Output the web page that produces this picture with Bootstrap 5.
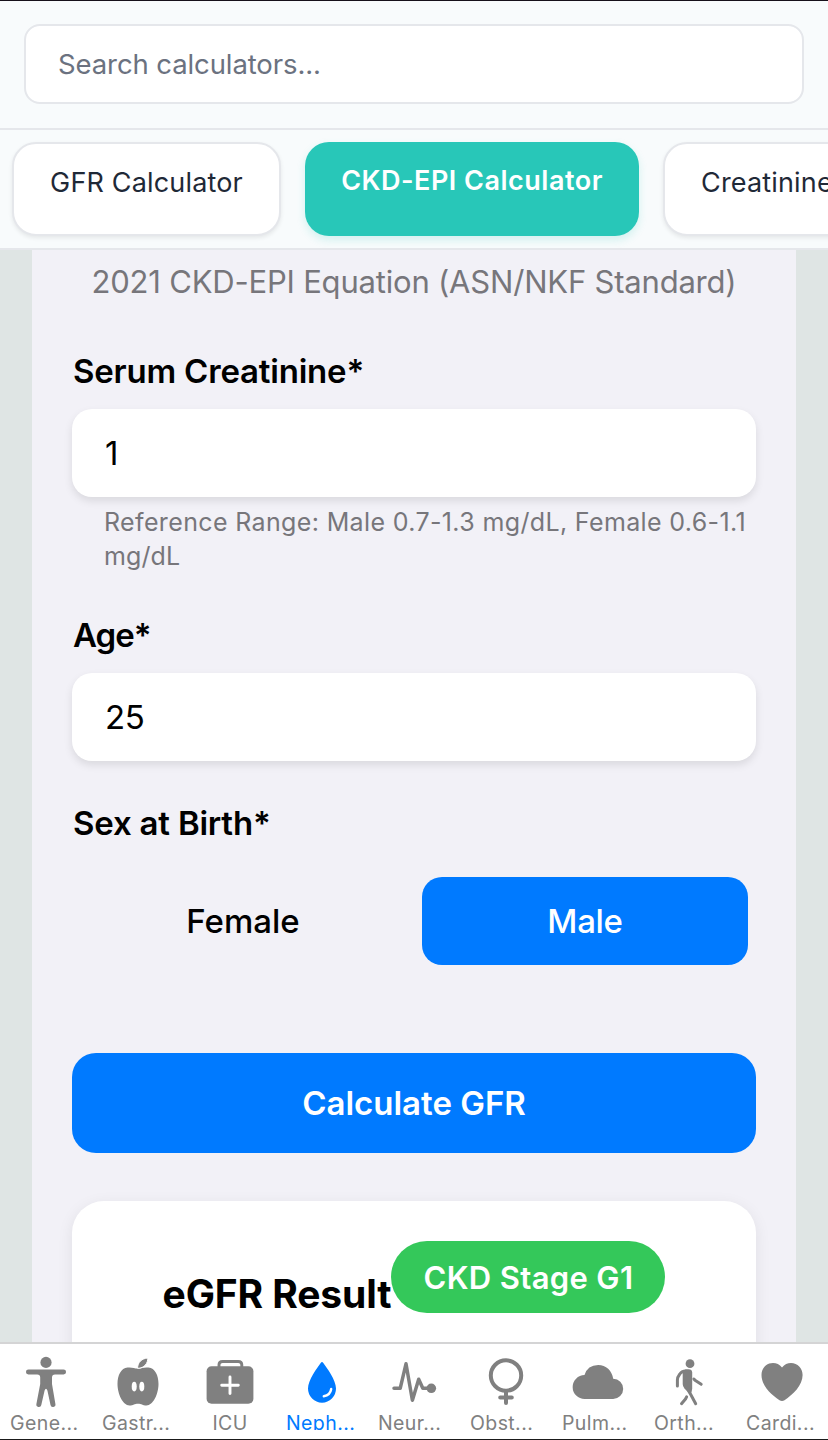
<!DOCTYPE html>
<html lang="en">
<head>
<meta charset="utf-8">
<meta name="viewport" content="width=device-width, initial-scale=1">
<title>CKD-EPI Calculator</title>
<link href="https://cdn.jsdelivr.net/npm/bootstrap@5.3.0/dist/css/bootstrap.min.css" rel="stylesheet">
<style>
  body { font-family: Inter, "Liberation Sans", sans-serif; background: #dfe5e4; color: #000; height: 1440px; border-top: 1px solid #16101a; border-bottom: 1px solid #1a1a1a; }
  .text-line { white-space: nowrap; }
  .search-bar { height: 129px; padding: 23px 24px 24px; background: #f8fbfc; border-bottom: 2px solid #e5e7eb; }
  .search-bar .form-control { height: 80px; border: 2px solid #e5e7eb; border-radius: 16px; padding: 0 32px; font-size: 27.5px; letter-spacing: -.1px; color: #1f2937; }
  .search-bar .form-control::placeholder { color: #6b7280; opacity: 1; }
  .tab-strip { height: 120px; padding: 12px; gap: 24px; background: #f8fbfc; border-bottom: 2px solid #e5e7eb; }
  .calc-tab { height: 94px; border: 2px solid #e5e7eb; border-radius: 24px; background: #fff; color: #1f2937; font-size: 27px; line-height: 36px; padding: 21px 0; box-shadow: 0 2px 4px rgba(0,0,0,.08); text-align: center; letter-spacing: .17px; }
  .calc-tab.active { border: 0; background: #28c7b8; color: #fff; font-weight: 600; letter-spacing: .5px; box-shadow: 0 4px 8px rgba(40,199,184,.18); }
  .tab-gfr { width: 269px; } .tab-epi { width: 334px; } .tab-cre { width: 334px; text-align: left !important; padding-left: 36px; }
  .form-area { width: 764px; background: #f2f1f7; padding: 12px 40px 0; }
  .subtitle { font-size: 31px; line-height: 40px; letter-spacing: -.2px; color: #77767b; }
  .field-label { font-size: 33px; line-height: 42px; font-weight: 600; letter-spacing: -.2px; padding-left: 1px; }
  .label-short { letter-spacing: -1px; }
  .value-input { height: 88px; border: 0; border-radius: 20px; padding: 0 33px; font-size: 33px; letter-spacing: -.5px; color: #000; box-shadow: 0 4px 8px rgba(0,0,0,.1); }
  .help-text { font-size: 25px; line-height: 34px; color: #77767b; padding-left: 32px; margin-top: 8px; letter-spacing: .36px; white-space: nowrap; }
  .help-text .unit { letter-spacing: .1px; }
  .sex-row { gap: 16px; padding: 0 8px; }
  .sex-option { height: 88px; border: 0; border-radius: 20px; font-size: 33px; font-weight: 500; color: #000; padding: 2px 0 0; }
  .sex-option.active, .calc-btn, .calc-btn:hover { background: #007aff; color: #fff; }
  .sex-option.active { letter-spacing: -.3px; }
  .calc-btn { height: 100px; border: 0; border-radius: 24px; font-size: 33px; font-weight: 600; padding: 2px 0 0; }
  .result-card { height: 300px; border-radius: 32px; background: #fff; padding-top: 40px; box-shadow: 0 4px 16px rgba(0,0,0,.08); }
  .result-title { font-size: 39px; line-height: 48px; font-weight: 700; margin-top: 29px; letter-spacing: -.12px; }
  .stage-pill { width: 274px; height: 72px; border-radius: 36px; background: #34c85a; color: #fff; font-size: 31px; font-weight: 600; letter-spacing: .35px; padding-top: 2px; }
  .tab-bar { height: 97px; border-top: 2px solid #d4d4d5; background: #fff; }
  .tab-item { width: 92px; color: #808080; padding-top: 6px; }
  .tab-item.active { color: #007aff; }
  .tab-item svg { width: 92px; height: 62px; display: block; }
  .tab-label { font-size: 19.5px; line-height: 22px; height: 18px; margin-left: 10px; width: 80px; overflow: hidden; white-space: nowrap; letter-spacing: .4px; }
  .tab-label.centred { text-align: center; margin-left: 6px; }
</style>
</head>
<body class="d-flex flex-column overflow-hidden">
<header class="search-bar flex-shrink-0">
  <input class="form-control shadow-none" type="text" placeholder="Search calculators...">
</header>
<nav class="tab-strip d-flex flex-shrink-0 overflow-hidden">
  <div class="calc-tab tab-gfr flex-shrink-0 text-line">GFR Calculator</div>
  <div class="calc-tab tab-epi active flex-shrink-0 text-line">CKD-EPI Calculator</div>
  <div class="calc-tab tab-cre flex-shrink-0 text-line">Creatinine Clearance</div>
</nav>
<main class="form-area flex-grow-1 mx-auto overflow-hidden">
  <div class="subtitle text-center text-line">2021 CKD-EPI Equation (ASN/NKF Standard)</div>
  <label class="field-label d-block" style="margin-top:48px" for="scr">Serum Creatinine*</label>
  <input id="scr" class="form-control value-input" style="margin-top:17px" value="1">
  <div class="help-text">Reference Range: Male 0.7-1.3 mg/dL, Female 0.6-1.1<br><span class="unit">mg/dL</span></div>
  <label class="field-label label-short d-block" style="margin-top:41px" for="age">Age*</label>
  <input id="age" class="form-control value-input" style="margin-top:17px" value="25">
  <div class="field-label" style="margin-top:41px">Sex at Birth*</div>
  <div class="sex-row d-flex" style="margin-top:33px">
    <button class="btn sex-option flex-fill w-50" type="button">Female</button>
    <button class="btn sex-option active flex-fill w-50" type="button">Male</button>
  </div>
  <button class="btn calc-btn w-100 d-block" style="margin-top:88px" type="button">Calculate GFR</button>
  <section class="result-card d-flex justify-content-center align-items-start" style="margin-top:48px">
    <h2 class="result-title mb-0 text-line">eGFR Result</h2>
    <div class="stage-pill d-flex align-items-center justify-content-center flex-shrink-0 text-line">CKD Stage G1</div>
  </section>
</main>
<footer class="tab-bar d-flex flex-shrink-0">
  <div class="tab-item">
    <svg viewBox="0 0 92 62" fill="currentColor"><circle cx="46" cy="12.4" r="5.6"/><path d="M28.4 19.6H63.6a2.4 2.4 0 0 1 0 4.9H55Q52 24.5 52 27.500V34L55.400 54A2.500 2.500 0 0 1 50.500 55L47.400 40.500Q46 37 44.600 40.500L41.300 55A2.500 2.500 0 0 1 36.400 54L40.200 34V27.500Q40.200 24.500 37.200 24.500H28.400a2.400 2.400 0 0 1 0-4.900Z"/></svg>
    <div class="tab-label">Gene...</div>
  </div>
  <div class="tab-item">
    <svg viewBox="0 0 92 62"><path fill="currentColor" d="M46 18.500C50 18.500 51.500 17 56.500 17.500C63 18.200 66.500 25 66.500 34C66.500 44 61 55.500 54.500 55.500C50.500 55.500 49.500 53.800 46 53.800S41.500 55.500 37.500 55.500C31 55.500 25.500 44 25.500 34C25.500 25 29 18.200 35.500 17.500C40.500 17 42 18.500 46 18.500Z"/><path fill="currentColor" stroke="#fff" stroke-width="1" d="M45.600 18.400C45.500 12 50 8.500 55.800 8C56 13 52.500 18.200 45.600 18.400Z"/><ellipse cx="42.200" cy="36.600" rx="2.500" ry="4.800" fill="#fff"/><ellipse cx="49.800" cy="36.600" rx="2.500" ry="4.800" fill="#fff"/></svg>
    <div class="tab-label">Gastr...</div>
  </div>
  <div class="tab-item">
    <svg viewBox="0 0 92 62"><rect x="22.600" y="16.200" width="46.800" height="37.600" rx="5" fill="currentColor"/><path d="M35 18V14.800Q35 11.500 38.600 11.500H54.200Q57.800 11.500 57.800 14.800V18" fill="none" stroke="currentColor" stroke-width="2.900"/><path d="M46 27V43.600M37.700 35.300H54.300" stroke="#fff" stroke-width="2.900" stroke-linecap="round"/></svg>
    <div class="tab-label centred">ICU</div>
  </div>
  <div class="tab-item active">
    <svg viewBox="0 0 92 62"><path fill="currentColor" d="M44.700 13Q46 11.200 47.300 13C51 18 60 30 60 38.500A14 14.200 0 0 1 32 38.500C32 30 41 18 44.700 13Z"/><path d="M55.200 39Q54.300 45.200 47.800 46.200" fill="none" stroke="#fff" stroke-width="2.400" stroke-linecap="round"/></svg>
    <div class="tab-label">Neph...</div>
  </div>
  <div class="tab-item">
    <svg viewBox="0 0 92 62"><path d="M26 38.300H32.200L38 13.800L44.400 50.300L50.700 29.300L54.800 38.300H63" fill="none" stroke="currentColor" stroke-width="3.500" stroke-linecap="round" stroke-linejoin="round"/><circle cx="63.300" cy="38.300" r="4.800" fill="currentColor"/></svg>
    <div class="tab-label">Neur...</div>
  </div>
  <div class="tab-item">
    <svg viewBox="0 0 92 62" fill="none" stroke="currentColor" stroke-width="4" stroke-linecap="round"><circle cx="46" cy="25.500" r="15.200"/><path d="M46 41V53.100M40.200 47.600H51.800"/></svg>
    <div class="tab-label">Obst...</div>
  </div>
  <div class="tab-item">
    <svg viewBox="0 0 92 62" fill="currentColor"><path d="M32.700 49A11.900 11.900 0 0 1 32.500 25.100Q35.500 15 46.200 15C54 15 60 20.500 61.200 28.800A10.100 10.100 0 0 1 61 49Z"/></svg>
    <div class="tab-label">Pulm...</div>
  </div>
  <div class="tab-item">
    <svg viewBox="0 0 92 62"><circle cx="46" cy="13.700" r="4.400" fill="currentColor"/><path fill="currentColor" d="M38.700 23Q39 19.300 43 19.300H44.500Q48 19.300 48.200 22.500V38.500Q48.200 42 46 44.500L40.500 38.500Q38.700 36.500 38.700 34Z"/><path d="M42 21Q37.500 21 35.500 24.500Q33.500 27 33.400 30V36M49.900 29L51 30.300L57.200 34.300M45 41.500L47 45L51.700 53.800M42.600 46.800L41.500 49L37.500 53.700" fill="none" stroke="currentColor" stroke-width="3" stroke-linecap="round" stroke-linejoin="round"/></svg>
    <div class="tab-label">Orth...</div>
  </div>
  <div class="tab-item">
    <svg viewBox="0 0 92 62" fill="currentColor"><path d="M46 17.400C48.500 14.500 51.500 13 55 13C61.500 13 66.600 18 66.600 25C66.600 35.500 57 44.500 48.500 50.200Q46 51.800 43.500 50.200C35 44.500 25.500 35.500 25.500 25C25.500 18 30.500 13 37 13C40.500 13 43.500 14.500 46 17.400Z"/></svg>
    <div class="tab-label">Cardi...</div>
  </div>
</footer>
<script src="https://cdn.jsdelivr.net/npm/bootstrap@5.3.0/dist/js/bootstrap.bundle.min.js"></script>
</body>
</html>
